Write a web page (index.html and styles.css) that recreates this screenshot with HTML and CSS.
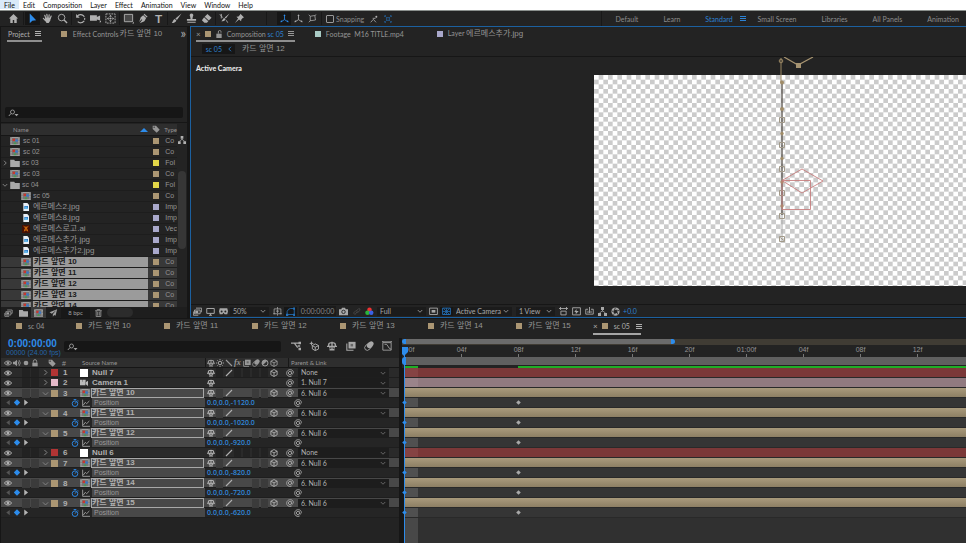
FILE: index.html
```html
<!DOCTYPE html>
<html lang="en">
<head>
<meta charset="utf-8">
<title>Composition editor</title>
<link rel="stylesheet" href="styles.css">
</head>
<body>
<svg class="sprite" aria-hidden="true">
  <symbol id="home" viewBox="0 0 12 12"><path fill="currentColor" d="M6 1 1 6h1.500v5h2.700V7.500h1.600V11h2.700V6H11z"/></symbol>
  <symbol id="arrow" viewBox="0 0 12 12"><path fill="currentColor" d="M3 .5v10.800l2.800-2.900 4.200-.4z"/></symbol>
  <symbol id="hand" viewBox="0 0 12 12"><path fill="none" stroke="currentColor" stroke-width="1.300" stroke-linecap="round" d="M4.300 6 3 2.500M5.800 5.500 5.300 1.500M7.400 5.500l.4-3.600M8.800 6.300l1.200-3M3.600 8 1.500 5.800"/><path fill="currentColor" d="M3.700 5.300h5.600L9 8.500 7.300 11H5L2.800 7.500z"/></symbol>
  <symbol id="zoomtool" viewBox="0 0 12 12"><circle cx="5" cy="5" r="3.600" fill="none" stroke="currentColor" stroke-width="1"/><path stroke="currentColor" stroke-width="1.500" d="m7.700 7.700 3.300 3.300"/></symbol>
  <symbol id="rotate" viewBox="0 0 12 12"><path fill="none" stroke="currentColor" stroke-width="1.200" d="M2.500 3.500A4.500 4.500 0 1 1 3 9.500" stroke-dasharray="9 1 2 1"/><path fill="currentColor" d="M1.200 1v4.200h4z"/></symbol>
  <symbol id="cam" viewBox="0 0 12 12"><path fill="currentColor" d="M0 2.500h7.500v1.800L11 2.800v5.400L7.500 7v1.500H0zM10 10l2-2v2z"/></symbol>
  <symbol id="pan" viewBox="0 0 12 12"><path fill="none" stroke="currentColor" stroke-dasharray="2 1" d="M1 1h10v10H1z"/><path fill="currentColor" d="m6 2 1.500 2h-3zM6 10 4.500 8h3zM2 6l2-1.500v3zM10 6 8 7.500v-3z"/><circle cx="6" cy="6" r="1.200" fill="currentColor"/></symbol>
  <symbol id="rect" viewBox="0 0 12 12"><path fill="#484848" stroke="currentColor" d="M1.500 1.500h9v8h-9z"/><path fill="currentColor" d="m12 9.500-2 2h2z"/></symbol>
  <symbol id="pen" viewBox="0 0 12 12"><path fill="currentColor" d="M7 .8 10.500 4l-1 1L6.200 1.800zM5.700 2.500l3.200 3L7 9l-5 2.300 2-3 .8-.8-.8-.8-2.700 3L3 4.500z"/></symbol>
  <symbol id="brush" viewBox="0 0 12 12"><path fill="currentColor" d="m11.500.5-5 7L4.800 6zM4.200 6.600l1.700 1.500C5 10.300 3 11 .8 11c1.200-1 1.200-3.500 3.400-4.400z"/></symbol>
  <symbol id="stamp" viewBox="0 0 12 12"><path fill="currentColor" d="M6 .5a2 2 0 0 1 1.500 3.300L7 6.500h4v2H1v-2h4l-.5-2.700A2 2 0 0 1 6 .5zM1.500 9.500h9v1h-9z"/></symbol>
  <symbol id="eraser" viewBox="0 0 12 12"><path fill="currentColor" d="m7 1 4.500 4.200L8.500 8.300 4 4z"/><path fill="currentColor" d="M3.400 4.700 8 9l-1.500 1.500H3.700L1 8z"/></symbol>
  <symbol id="roto" viewBox="0 0 12 12"><path fill="currentColor" d="m11.500.5-4 5.500-1.300-1.200zM5.900 5.400l1.300 1.300C6.500 8.500 4.500 9 2.500 9c1.500-1 1.600-3 3.400-3.600z"/><path fill="none" stroke="currentColor" d="M1 1.500 4 5M2.500 1v5M8 8l1.500 2.500"/></symbol>
  <symbol id="pin" viewBox="0 0 12 12"><path fill="currentColor" d="m7 .8 4 4-1.200.4L8 7l-.3 2L5.500 7 1 11l3.500-5L2.700 4l2.200-.3L6.600 2z"/></symbol>
  <symbol id="axis" viewBox="0 0 12 12"><path fill="none" stroke="currentColor" stroke-width="1.100" d="M6 7.500V2M6 7.500 2 10M6 7.500 10 10"/><path fill="currentColor" d="m6 .3 1.500 2.500h-3zM.5 11l1-3 1.700 2.500zM11.500 11l-1-3-1.700 2.500z"/></symbol>
  <symbol id="axisview" viewBox="0 0 12 12"><path fill="none" stroke="currentColor" d="M3 3 9 2l1 6-7 1zM1 11l2.500-2.500M1 1l2 2M11 1 9 2"/></symbol>
  <symbol id="snap" viewBox="0 0 12 12"><path fill="none" stroke="currentColor" stroke-width="1.200" d="m1 11 4-4.500 4 4.500M4 5h4l1-1"/><circle cx="9.500" cy="2.500" r="1.500" fill="currentColor"/></symbol>
  <symbol id="expand" viewBox="0 0 12 12"><path fill="none" stroke="currentColor" d="M1 3V1h2M9 1h2v2M11 9v2H9M3 11H1V9M2 2l2 2M10 2 8 4M2 10l2-2M10 10 8 8M4 4h4v4H4z"/></symbol>
  <symbol id="menu" viewBox="0 0 6 5"><path fill="currentColor" d="M0 0h6v1H0zM0 2h6v1H0zM0 4h6v1H0z"/></symbol>
  <symbol id="lock" viewBox="0 0 12 12"><path fill="currentColor" d="M2 5.500h8V11H2z"/><path fill="none" stroke="currentColor" stroke-width="1.400" d="M3.500 5.500V3.500a2.500 2.500 0 0 1 5 0v2"/></symbol>
  <symbol id="unlock" viewBox="0 0 12 12"><path fill="currentColor" d="M2 5.500h8V12H2z"/><path fill="none" stroke="currentColor" stroke-width="1.500" d="M5 5.500V3a2 2 0 0 1 4-.5V4"/></symbol>
  <symbol id="comp" viewBox="0 0 12 10"><path fill="#a9a9a9" d="M0 0h12v10H0z"/><path fill="#777" d="M2 1h8v8H2z"/><path stroke="#555" stroke-dasharray="1 1" d="M1 0v10M11 0v10"/><path fill="#c8372e" d="M3 2h3v3H3z"/><circle cx="8" cy="4.500" r="1.800" fill="#3e76c0"/><path fill="#479a56" d="M6 5.500 8 9H4z"/></symbol>
  <symbol id="folder" viewBox="0 0 12 10"><path fill="#a9a9a9" d="M0 1h5l1 1.500h6V10H0z"/></symbol>
  <symbol id="jpg" viewBox="0 0 12 12"><path fill="#e8eef5" d="M2 0h6l2.500 2.500V12H2z"/><path fill="#2b78c8" d="M3.500 4.500h5.500V9H3.500z"/><path fill="#62b7e9" d="M3.500 7 6 5l3 3v1H3.500z"/></symbol>
  <symbol id="ai" viewBox="0 0 12 12"><path fill="#431005" d="M0 0h12v12H0z"/><path fill="none" stroke="#e2730d" stroke-width="1.400" d="m3.500 9.500 2.500-7 2.500 7M4 7.500h4M2.500 2 5 4M9.500 2 7 4"/></symbol>
  <symbol id="search" viewBox="0 0 16 12"><circle cx="6.500" cy="4.500" r="3" fill="none" stroke="currentColor" stroke-width="1.300"/><path stroke="currentColor" stroke-width="1.400" d="M4.300 6.700 1 10.500"/><path fill="currentColor" d="M9.500 7.500h6l-3 3.500z"/></symbol>
  <symbol id="tag" viewBox="0 0 12 12"><path fill="currentColor" d="M1 1h5l5.500 6L7 11.500 1 6z"/><circle cx="3.200" cy="3.200" r="1" fill="#222"/></symbol>
  <symbol id="flow" viewBox="0 0 12 12"><path fill="currentColor" d="M4 0h4v4H4zM0 8h4v4H0zM8 8h4v4H8z"/><path fill="none" stroke="currentColor" d="M6 4v2M2 8l4-3 4 3"/></symbol>
  <symbol id="eye" viewBox="0 0 12 12"><path fill="none" stroke="currentColor" stroke-width="1.500" d="M.5 6C3.500 2 8.500 2 11.500 6 8.500 10 3.500 10 .5 6z"/><circle cx="6" cy="6" r="2.200" fill="currentColor"/></symbol>
  <symbol id="speaker" viewBox="0 0 12 12"><path fill="currentColor" d="M0 4h2.500L6 1v10L2.500 8H0z"/><path fill="none" stroke="currentColor" stroke-width="1.200" d="M7.500 3.500q2 2.500 0 5M9 1.500q4 4.500 0 9"/></symbol>
  <symbol id="dot" viewBox="0 0 12 12"><circle cx="6" cy="6" r="3.500" fill="currentColor"/></symbol>
  <symbol id="shy" viewBox="0 0 12 12"><path fill="none" stroke="currentColor" stroke-width="1.600" d="M2 6V4.500Q2 2 6 2t4 2.500V6M0 6.500h12M6 1v10M3 10.500h6M3.500 6.500v2.500M8.500 6.500v2.500"/></symbol>
  <symbol id="sun" viewBox="0 0 12 12"><circle cx="6" cy="6" r="2.500" fill="none" stroke="currentColor" stroke-width="1.500"/><path stroke="currentColor" stroke-width="1.500" d="M6 0v2M6 10v2M0 6h2M10 6h2M2 2l1.500 1.500M10 2 8.500 3.500M2 10l1.500-1.500M10 10 8.500 8.500"/></symbol>
  <symbol id="slash" viewBox="0 0 12 12"><path stroke="currentColor" stroke-width="1.700" d="m1.500 10.500 9-9"/></symbol>
  <symbol id="backslash" viewBox="0 0 12 12"><path stroke="currentColor" stroke-width="1.700" d="m1.500 1.500 9 9"/></symbol>
  <symbol id="blend" viewBox="0 0 12 12"><path fill="currentColor" d="M3 1h8.500v8H3z"/><path fill="none" stroke="currentColor" stroke-width="1.300" d="M1 3v8h8"/><path fill="#666" d="M5.500 3.500h3v3h-3z"/></symbol>
  <symbol id="blur" viewBox="0 0 12 12"><ellipse cx="7.500" cy="4.500" rx="4.500" ry="3.200" transform="rotate(-45 7.500 4.500)" fill="currentColor"/><ellipse cx="5" cy="7" rx="4.800" ry="3.300" transform="rotate(-45 5 7)" fill="none" stroke="currentColor"/></symbol>
  <symbol id="adjust" viewBox="0 0 12 12"><circle cx="6" cy="6" r="4.500" fill="none" stroke="currentColor" stroke-width="1.500"/><path fill="currentColor" d="M2.500 9.500l7-7a5 5 0 0 0-7 7z"/></symbol>
  <symbol id="cube" viewBox="0 0 12 12"><path fill="none" stroke="currentColor" stroke-width="1.300" d="m6 .8 4.700 2.500v5.400L6 11.200 1.300 8.700V3.300zM1.300 3.300 6 5.800l4.700-2.500M6 5.800v5.400"/></symbol>
  <symbol id="whip" viewBox="0 0 12 12"><path fill="none" stroke="currentColor" stroke-width="1.300" d="M8 4.500A2.500 2.500 0 1 0 8 7.500V3.500M8 7q1.500 1.500 2.700-.5C12 2 7.500 0 4 1.500S0 8 3 10.300q3 1.700 5.500.2"/></symbol>
  <symbol id="down" viewBox="0 0 12 12"><path fill="none" stroke="currentColor" stroke-width="1.600" d="m1.500 4 4.500 4.500L10.500 4"/></symbol>
  <symbol id="right" viewBox="0 0 12 12"><path fill="none" stroke="currentColor" stroke-width="1.700" d="m4 1.500 4.500 4.500L4 10.500"/></symbol>
  <symbol id="left" viewBox="0 0 12 12"><path fill="none" stroke="currentColor" stroke-width="1.700" d="M8 1.500 3.500 6 8 10.500"/></symbol>
  <symbol id="watch" viewBox="0 0 12 12"><circle cx="6" cy="7" r="4.200" fill="none" stroke="currentColor" stroke-width="1.400"/><path fill="none" stroke="currentColor" stroke-width="1.400" d="M4 .8h4M6 7l2-2.500M10 2l1.500 1.500"/></symbol>
  <symbol id="graph" viewBox="0 0 12 12"><path fill="none" stroke="currentColor" stroke-width="1.200" d="M1 1v10h11M2 9l3-4 2 2 4-4"/></symbol>
  <symbol id="graphbox" viewBox="0 0 12 12"><path fill="none" stroke="currentColor" d="M1 2v9h10V2zM0 1h12M3 4q3-1 4 2t4 4M1 1V0M11 1V0"/></symbol>
  <symbol id="prev" viewBox="0 0 12 12"><path fill="currentColor" d="M9 1.500v9L3 6z"/></symbol>
  <symbol id="next" viewBox="0 0 12 12"><path fill="currentColor" d="M3 1v10l6.500-5z"/></symbol>
  <symbol id="key" viewBox="0 0 12 12"><path fill="currentColor" d="m6 .5 5.500 5.500L6 11.500.5 6z"/></symbol>
  <symbol id="solid" viewBox="0 0 12 12"><path fill="#fff" d="M0 0h12v12H0z"/></symbol>
  <symbol id="film" viewBox="0 0 12 12"><path fill="#bbb" d="M0 1h4v3H0zM4.500 1h4v3h-4zM0 4h8v5.500H0zM8.500 5 12 2.500v8L8.500 8z"/></symbol>
  <symbol id="footage" viewBox="0 0 12 12"><path fill="none" stroke="currentColor" stroke-width="1.200" d="M4 1.500h7.500v5H10M2 4h7.500v5H2zM.5 6v5H7"/><path fill="currentColor" d="M3 5h4v3H3z"/></symbol>
  <symbol id="plane" viewBox="0 0 12 12"><path fill="currentColor" d="M11.500.5 0 5l3.500 2L10 2 5 8v3.500l2-2.500 2 1z"/></symbol>
  <symbol id="trash" viewBox="0 0 12 12"><path fill="none" stroke="currentColor" stroke-width="1.200" d="M1 2.500h10M4 2V.8h4V2M2.500 3v8.300h7V3M4.800 4v6M7.200 4v6"/></symbol>
  <symbol id="monitor" viewBox="0 0 12 12"><path fill="none" stroke="currentColor" stroke-width="1.300" d="M1 2h10v6.500H1zM4 11h4M6 8.500V11"/></symbol>
  <symbol id="goggles" viewBox="0 0 12 12"><path fill="currentColor" d="M1 1.500h10l1 4-1 4H7.500L6 7.500 4.500 9.500H1l-1-4z"/><circle cx="3.500" cy="6" r="1.300" fill="#222"/><circle cx="8.500" cy="6" r="1.300" fill="#222"/></symbol>
  <symbol id="guides" viewBox="0 0 12 12"><path fill="none" stroke="currentColor" d="M1.500 2.500h9v6.500h-9zM0 9h3M9 9h3M4 5.500h4M6 0v3.500M6 4v4M6 9v2.500"/></symbol>
  <symbol id="mask" viewBox="0 0 12 12"><path fill="none" stroke="currentColor" stroke-width="1.100" d="M1.500 10V6Q3 2 6 2h5v8z"/><path fill="currentColor" d="M0 9h3v3H0zM9.500.5h2.500v3H9.500zM9.500 9H12v3H9.500z"/></symbol>
  <symbol id="photo" viewBox="0 0 12 12"><path fill="currentColor" d="M0 3h3l1-2h4l1 2h3v8H0z"/><circle cx="6" cy="6.500" r="2.300" fill="none" stroke="#222" stroke-width="1.200"/></symbol>
  <symbol id="rgb" viewBox="0 0 12 12"><circle cx="6" cy="3.500" r="3" fill="#e33"/><circle cx="3.300" cy="7.500" r="3" fill="#2bb53a"/><circle cx="8.300" cy="7.500" r="3" fill="#3a62e8"/></symbol>
  <symbol id="roi" viewBox="0 0 12 12"><path fill="none" stroke="currentColor" stroke-width="1.200" d="M.8 1.500h10.400v8.500H.8z"/><path fill="currentColor" d="M3.500 4h5v3.500h-5z"/></symbol>
  <symbol id="grid" viewBox="0 0 12 12"><path fill="none" stroke="currentColor" stroke-width="1.200" d="M.8 1.500h10.400v8.500H.8z"/><path stroke="currentColor" d="m2 2 8 8M10 2 2 10M6 1.500v8.500M1 6h10"/></symbol>
  <symbol id="aspect" viewBox="0 0 12 12"><path fill="none" stroke="currentColor" stroke-width="1.200" d="M0 2h12M2 0v4M10 0v4M2.500 5.500h7v5h-7z"/></symbol>
  <symbol id="fast" viewBox="0 0 12 12"><path fill="none" stroke="currentColor" stroke-width="1.200" d="M.8 1h10.400v9.500H.8z"/><path fill="currentColor" d="M6 2.500v2.700h3L5 9.500V6.500H3z"/></symbol>
  <symbol id="tlbtn" viewBox="0 0 12 12"><path fill="none" stroke="currentColor" stroke-width="1.200" d="M1 3v6.500h10V3H8M1 3h3M4 5v3M8 5v3M6 0v8"/></symbol>
  <symbol id="shutter" viewBox="0 0 12 12"><circle cx="6" cy="6" r="4" fill="none" stroke="currentColor" stroke-width="3"/><path stroke="#222" d="m6 1-2 4M11 5 7 4M9 10 8 6M3 10l3-2M1 5l3 2"/></symbol>
  <symbol id="link" viewBox="0 0 12 12"><path fill="none" stroke="currentColor" stroke-width="1.300" d="m2 8 3-3q2-1 2 1L4 10zM6 5l3-3q3 0 1 3L7 8"/></symbol>
  <symbol id="mini" viewBox="0 0 12 12"><path fill="none" stroke="currentColor" stroke-width="1.500" d="M0 2.500h4L8 8M4 2.500h7"/><path fill="currentColor" d="M9 1h3v3H9zM8 5h3v2H8zM9 8h3v3H9z"/></symbol>
  <symbol id="draft" viewBox="0 0 12 12"><path fill="none" stroke="currentColor" stroke-width="1.200" d="m7.500 3.500 4 2v4l-4 2-3.500-2v-4zM4 5.500l3.500 2 4-2M7.500 7.500v4"/><path fill="currentColor" d="m3 0 .8 2 2 .8-2 .8L3 6l-.8-2.300-2-.9 2-.8z"/></symbol>
</svg>

<div class="app">
  <nav class="menubar">
    <button class="on">File</button><button>Edit</button><button>Composition</button><button>Layer</button><button>Effect</button><button>Animation</button><button>View</button><button>Window</button><button>Help</button>
  </nav>

  <header class="toolbar">
    <div class="tools home"><button aria-label="Home"><svg><use href="#home"/></svg></button></div>
    <div class="tools"><button class="on" aria-label="Selection"><svg><use href="#arrow"/></svg></button><button aria-label="Hand"><svg><use href="#hand"/></svg></button><button aria-label="Zoom"><svg><use href="#zoomtool"/></svg></button></div>
    <div class="tools"><button aria-label="Rotate"><svg><use href="#rotate"/></svg></button><button aria-label="Camera"><svg><use href="#cam"/></svg></button><button aria-label="Pan behind"><svg><use href="#pan"/></svg></button></div>
    <div class="tools"><button aria-label="Rectangle"><svg><use href="#rect"/></svg></button><button aria-label="Pen"><svg><use href="#pen"/></svg></button><button class="type">T</button></div>
    <div class="tools"><button aria-label="Brush"><svg><use href="#brush"/></svg></button><button aria-label="Clone stamp"><svg><use href="#stamp"/></svg></button><button aria-label="Eraser"><svg><use href="#eraser"/></svg></button></div>
    <div class="tools wide"><button aria-label="Roto brush"><svg><use href="#roto"/></svg></button><button aria-label="Puppet pin"><svg><use href="#pin"/></svg></button></div>
    <div class="tools axes"><button class="on" aria-label="Local axis"><svg><use href="#axis"/></svg></button><button aria-label="World axis"><svg><use href="#axis"/></svg></button><button aria-label="View axis"><svg><use href="#axisview"/></svg></button></div>
    <label class="snapping"><input type="checkbox">Snapping</label>
    <button class="snapbtn" aria-label="Snap edges"><svg><use href="#snap"/></svg></button>
    <button class="snapbtn blue" aria-label="Snap bounds"><svg><use href="#expand"/></svg></button>
    <nav class="workspaces">
      <button>Default</button><button>Learn</button><button class="current">Standard<svg class="burger"><use href="#menu"/></svg></button><button>Small Screen</button><button>Libraries</button><button>All Panels</button><button>Animation</button>
    </nav>
  </header>

  <main class="upper">
    <section class="project">
      <div class="tabs">
        <button class="tab active">Project<svg class="burger"><use href="#menu"/></svg></button>
        <button class="tab effects"><i class="sw sand"></i>Effect Controls <span class="ko">카드 앞면 10</span></button>
        <button class="more">»</button>
      </div>
      <div class="preview"></div>
      <label class="search"><svg><use href="#search"/></svg><input type="text" aria-label="Search project"></label>
      <div class="list">
        <table>
          <colgroup><col><col class="c-label"><col class="c-type"></colgroup>
          <thead><tr><th>Name<svg class="sort" viewBox="0 0 8 5"><path d="M4 0 8 4H0z"/></svg></th><th><svg><use href="#tag"/></svg></th><th>Type</th></tr></thead>
          <tbody>
            <tr><td><div class="n"><svg><use href="#comp"/></svg>sc 01</div></td><td><i class="sw sand"></i></td><td>Co</td></tr>
            <tr><td><div class="n"><svg><use href="#comp"/></svg>sc 02</div></td><td><i class="sw sand"></i></td><td>Co</td></tr>
            <tr><td><div class="n f"><svg class="tw"><use href="#right"/></svg><svg><use href="#folder"/></svg>sc 03</div></td><td><i class="sw yellow"></i></td><td>Fol</td></tr>
            <tr><td><div class="n"><svg><use href="#comp"/></svg>sc 03</div></td><td><i class="sw sand"></i></td><td>Co</td></tr>
            <tr><td><div class="n f"><svg class="tw"><use href="#down"/></svg><svg><use href="#folder"/></svg>sc 04</div></td><td><i class="sw yellow"></i></td><td>Fol</td></tr>
            <tr><td><div class="n in"><svg><use href="#comp"/></svg>sc 05</div></td><td><i class="sw sand"></i></td><td>Co</td></tr>
            <tr><td><div class="n in ko"><svg><use href="#jpg"/></svg>에르메스2.jpg</div></td><td><i class="sw lilac"></i></td><td>Imp</td></tr>
            <tr><td><div class="n in ko"><svg><use href="#jpg"/></svg>에르메스8.jpg</div></td><td><i class="sw lilac"></i></td><td>Imp</td></tr>
            <tr><td><div class="n in ko"><svg><use href="#ai"/></svg>에르메스로고.ai</div></td><td><i class="sw lilac"></i></td><td>Vec</td></tr>
            <tr><td><div class="n in ko"><svg><use href="#jpg"/></svg>에르메스추가.jpg</div></td><td><i class="sw lilac"></i></td><td>Imp</td></tr>
            <tr><td><div class="n in ko"><svg><use href="#jpg"/></svg>에르메스추가2.jpg</div></td><td><i class="sw lilac"></i></td><td>Imp</td></tr>
            <tr class="sel"><td><div class="n in ko"><svg><use href="#comp"/></svg><b>카드 앞면 10</b></div></td><td><i class="sw sand"></i></td><td>Co</td></tr>
            <tr class="sel"><td><div class="n in ko"><svg><use href="#comp"/></svg><b>카드 앞면 11</b></div></td><td><i class="sw sand"></i></td><td>Co</td></tr>
            <tr class="sel"><td><div class="n in ko"><svg><use href="#comp"/></svg><b>카드 앞면 12</b></div></td><td><i class="sw sand"></i></td><td>Co</td></tr>
            <tr class="sel"><td><div class="n in ko"><svg><use href="#comp"/></svg><b>카드 앞면 13</b></div></td><td><i class="sw sand"></i></td><td>Co</td></tr>
            <tr class="sel"><td><div class="n in ko"><svg><use href="#comp"/></svg><b>카드 앞면 14</b></div></td><td><i class="sw sand"></i></td><td>Co</td></tr>
          </tbody>
        </table>
        <div class="scroll"><svg><use href="#flow"/></svg><i></i></div>
      </div>
      <footer class="pfoot">
        <button aria-label="Interpret footage"><svg><use href="#footage"/></svg></button><button aria-label="New folder"><svg><use href="#folder"/></svg></button><button class="on" aria-label="New composition"><svg><use href="#comp"/></svg></button><button aria-label="Project settings"><svg><use href="#plane"/></svg></button><button class="bpc">8 bpc</button><button aria-label="Delete"><svg><use href="#trash"/></svg></button><i class="hthumb"></i>
      </footer>
    </section>

    <section class="viewer">
      <div class="tabs">
        <button class="tab active"><span class="x">×</span><i class="sw sand"></i><svg class="lk"><use href="#unlock"/></svg><span>Composition <em>sc 05</em></span><svg class="burger"><use href="#menu"/></svg></button>
        <button class="tab"><i class="sw mint"></i><span>Footage&nbsp; M16 TITLE.mp4</span></button>
        <button class="tab layer"><i class="sw lilac"></i><span>Layer <span class="ko">에르메스추가.jpg</span></span></button>
      </div>
      <div class="crumbs"><button class="on">sc 05<svg><use href="#left"/></svg></button><button class="ko">카드 앞면 12</button></div>
      <div class="stage">
        <span class="camname">Active Camera</span>
        <svg class="canvas">
          <defs><pattern id="check" width="28" height="28" patternUnits="userSpaceOnUse" patternTransform="scale(.33333)"><path fill="#fff" d="M0 0h28v28H0z"/><path fill="#cbcbcb" d="M14 0h14v14H14zM0 14h14v14H0z"/></pattern></defs>
          <rect width="100%" height="100%" fill="url(#check)"/>
          <path d="M188 8v132" stroke="#55504a" stroke-width="1.300"/><path d="M188 140v24" stroke="#aaa"/>
          <path d="M187 -17V8" stroke="#9a8763"/><circle cx="187" cy="-14" r="1.800" fill="none" stroke="#9a8763"/>
          <path d="m190-18 14 8 15-8" fill="none" stroke="#a79471" stroke-width="1.200"/><path fill="#a79471" d="M202-12h5v5h-5z"/>
          <g fill="#a08c68"><circle cx="188" cy="7.500" r="2"/><circle cx="188" cy="34" r="2"/><circle cx="188" cy="58.500" r="1.700"/><circle cx="188" cy="83.500" r="1.700"/><circle cx="188" cy="107" r="1.700"/><circle cx="188" cy="131" r="1.700"/></g>
          <path fill="none" stroke="#a29a8a" d="M185.500 42.500h5v5h-5zM185.500 67.500h5v5h-5zM185.500 91.500h5v5h-5zM185.500 115.500h5v5h-5zM185.500 138.500h5v5h-5zM185.500 161.500h5v5h-5zM186.500 162.500l3 3"/>
          <path fill="none" stroke="#c77a7a" d="m188 105.500 20-11.500 21 12-21 12zM188 105.500h28.500v29H188z" opacity=".85"/>
        </svg>
      </div>
      <footer class="vfoot">
        <button aria-label="Always preview"><svg><use href="#footage"/></svg></button><button aria-label="Primary viewer"><svg><use href="#monitor"/></svg></button><button aria-label="VR"><svg><use href="#goggles"/></svg></button>
        <span class="pick w-zoom"><select aria-label="Magnification"><option>50%</option></select><svg><use href="#down"/></svg></span>
        <button aria-label="Guides"><svg><use href="#guides"/></svg></button><button class="on" aria-label="Mask visibility"><svg><use href="#mask"/></svg></button>
        <button class="time">0:00:00:00</button>
        <button aria-label="Snapshot"><svg><use href="#photo"/></svg></button><button class="dim" aria-label="Show snapshot"><svg><use href="#link"/></svg></button><button aria-label="Channels"><svg><use href="#rgb"/></svg></button>
        <span class="pick w-res"><select aria-label="Resolution"><option>Full</option></select><svg><use href="#down"/></svg></span>
        <button aria-label="Region of interest"><svg><use href="#roi"/></svg></button><button class="on" aria-label="Transparency grid"><svg><use href="#grid"/></svg></button>
        <span class="pick w-cam"><select aria-label="3D view"><option>Active Camera</option></select><svg><use href="#down"/></svg></span>
        <span class="pick w-view"><select aria-label="View layout"><option>1 View</option></select><svg><use href="#down"/></svg></span>
        <button aria-label="Pixel aspect"><svg><use href="#aspect"/></svg></button><button aria-label="Fast previews"><svg><use href="#fast"/></svg></button><button aria-label="Timeline"><svg><use href="#tlbtn"/></svg></button><button aria-label="Flowchart"><svg><use href="#flow"/></svg></button><button class="exp" aria-label="Reset exposure"><svg><use href="#shutter"/></svg></button><button class="val">+0.0</button>
      </footer>
    </section>
  </main>

  <section class="timeline">
    <div class="ttabs">
      <button class="first"><i class="sw sand"></i>sc 04</button><button><i class="sw sand"></i><span class="ko">카드 앞면 10</span></button><button><i class="sw sand"></i><span class="ko">카드 앞면 11</span></button><button><i class="sw sand"></i><span class="ko">카드 앞면 12</span></button><button><i class="sw sand"></i><span class="ko">카드 앞면 13</span></button><button><i class="sw sand"></i><span class="ko">카드 앞면 14</span></button><button class="last"><i class="sw sand"></i><span class="ko">카드 앞면 15</span></button><button class="active"><span class="x">×</span><i class="sw sand"></i>sc 05<svg class="burger"><use href="#menu"/></svg></button>
    </div>
    <div class="split">
      <div class="layers">
        <div class="controls">
          <div class="clock"><strong>0:00:00:00</strong><small>00000 (24.00 fps)</small></div>
          <label class="search"><svg><use href="#search"/></svg><input type="text" aria-label="Search layers"></label>
          <div class="switchbar"><button aria-label="Mini flowchart"><svg><use href="#mini"/></svg></button><button aria-label="Draft 3D"><svg><use href="#draft"/></svg></button><button aria-label="Hide shy"><svg><use href="#shy"/></svg></button><button aria-label="Frame blending"><svg><use href="#blend"/></svg></button><button aria-label="Motion blur"><svg><use href="#blur"/></svg></button><button aria-label="Graph editor"><svg><use href="#graphbox"/></svg></button></div>
        </div>
        <div class="row head">
          <div class="av"><svg><use href="#eye"/></svg><svg><use href="#speaker"/></svg><svg><use href="#dot"/></svg><svg><use href="#lock"/></svg></div>
          <span></span><svg><use href="#tag"/></svg><span class="num">#</span><span class="src">Source Name</span>
          <div class="sws"><svg><use href="#shy"/></svg><svg><use href="#sun"/></svg><svg><use href="#backslash"/></svg><i>fx</i><svg><use href="#blend"/></svg><svg><use href="#blur"/></svg><svg><use href="#adjust"/></svg><svg><use href="#cube"/></svg></div>
          <span class="plink">Parent &amp; Link</span>
        </div>

        <div class="row"><div class="av"><svg><use href="#eye"/></svg><b></b><b></b><b></b></div><svg class="tw"><use href="#right"/></svg><i class="sw red"></i><span class="num">1</span><svg class="ic"><use href="#solid"/></svg><span class="name">Null 7</span><div class="sws"><svg><use href="#shy"/></svg><b></b><svg><use href="#slash"/></svg><b></b><b></b><b></b><b></b><svg><use href="#cube"/></svg></div><svg class="wh"><use href="#whip"/></svg><span class="pick"><select aria-label="Parent of layer 1"><option>None</option></select><svg><use href="#down"/></svg></span></div>
        <div class="row"><div class="av"><svg><use href="#eye"/></svg><b></b><b></b><b></b></div><svg class="tw"><use href="#right"/></svg><i class="sw pink"></i><span class="num">2</span><svg class="ic"><use href="#film"/></svg><span class="name">Camera 1</span><div class="sws"><svg><use href="#shy"/></svg></div><svg class="wh"><use href="#whip"/></svg><span class="pick"><select aria-label="Parent of layer 2"><option>1. Null 7</option></select><svg><use href="#down"/></svg></span></div>
        <div class="row sel"><div class="av"><svg><use href="#eye"/></svg><b></b><b></b><b></b></div><svg class="tw"><use href="#down"/></svg><i class="sw sand"></i><span class="num">3</span><svg class="ic"><use href="#comp"/></svg><span class="name ko">카드 앞면 10</span><div class="sws"><svg><use href="#shy"/></svg><b></b><svg><use href="#slash"/></svg><span></span><span></span><b></b><b></b><svg><use href="#cube"/></svg></div><svg class="wh"><use href="#whip"/></svg><span class="pick"><select aria-label="Parent of layer 3"><option>6. Null 6</option></select><svg><use href="#down"/></svg></span></div>
        <div class="row prop"><div class="nav"><svg><use href="#prev"/></svg><svg class="k"><use href="#key"/></svg><svg class="p"><use href="#next"/></svg></div><svg class="st"><use href="#watch"/></svg><svg><use href="#graph"/></svg><span class="pname">Position</span><button class="value">0.0,0.0,-1120.0</button><svg class="wh"><use href="#whip"/></svg></div>
        <div class="row sel"><div class="av"><svg><use href="#eye"/></svg><b></b><b></b><b></b></div><svg class="tw"><use href="#down"/></svg><i class="sw sand"></i><span class="num">4</span><svg class="ic"><use href="#comp"/></svg><span class="name ko">카드 앞면 11</span><div class="sws"><svg><use href="#shy"/></svg><b></b><svg><use href="#slash"/></svg><span></span><span></span><b></b><b></b><svg><use href="#cube"/></svg></div><svg class="wh"><use href="#whip"/></svg><span class="pick"><select aria-label="Parent of layer 4"><option>6. Null 6</option></select><svg><use href="#down"/></svg></span></div>
        <div class="row prop"><div class="nav"><svg><use href="#prev"/></svg><svg class="k"><use href="#key"/></svg><svg class="p"><use href="#next"/></svg></div><svg class="st"><use href="#watch"/></svg><svg><use href="#graph"/></svg><span class="pname">Position</span><button class="value">0.0,0.0,-1020.0</button><svg class="wh"><use href="#whip"/></svg></div>
        <div class="row sel"><div class="av"><svg><use href="#eye"/></svg><b></b><b></b><b></b></div><svg class="tw"><use href="#down"/></svg><i class="sw sand"></i><span class="num">5</span><svg class="ic"><use href="#comp"/></svg><span class="name ko">카드 앞면 12</span><div class="sws"><svg><use href="#shy"/></svg><b></b><svg><use href="#slash"/></svg><span></span><span></span><b></b><b></b><svg><use href="#cube"/></svg></div><svg class="wh"><use href="#whip"/></svg><span class="pick"><select aria-label="Parent of layer 5"><option>6. Null 6</option></select><svg><use href="#down"/></svg></span></div>
        <div class="row prop"><div class="nav"><svg><use href="#prev"/></svg><svg class="k"><use href="#key"/></svg><svg class="p"><use href="#next"/></svg></div><svg class="st"><use href="#watch"/></svg><svg><use href="#graph"/></svg><span class="pname">Position</span><button class="value">0.0,0.0,-920.0</button><svg class="wh"><use href="#whip"/></svg></div>
        <div class="row"><div class="av"><svg><use href="#eye"/></svg><b></b><b></b><b></b></div><svg class="tw"><use href="#right"/></svg><i class="sw red"></i><span class="num">6</span><svg class="ic"><use href="#solid"/></svg><span class="name">Null 6</span><div class="sws"><svg><use href="#shy"/></svg><b></b><svg><use href="#slash"/></svg><b></b><b></b><b></b><b></b><svg><use href="#cube"/></svg></div><svg class="wh"><use href="#whip"/></svg><span class="pick"><select aria-label="Parent of layer 6"><option>None</option></select><svg><use href="#down"/></svg></span></div>
        <div class="row sel"><div class="av"><svg><use href="#eye"/></svg><b></b><b></b><b></b></div><svg class="tw"><use href="#down"/></svg><i class="sw sand"></i><span class="num">7</span><svg class="ic"><use href="#comp"/></svg><span class="name ko">카드 앞면 13</span><div class="sws"><svg><use href="#shy"/></svg><b></b><svg><use href="#slash"/></svg><span></span><span></span><b></b><b></b><svg><use href="#cube"/></svg></div><svg class="wh"><use href="#whip"/></svg><span class="pick"><select aria-label="Parent of layer 7"><option>6. Null 6</option></select><svg><use href="#down"/></svg></span></div>
        <div class="row prop"><div class="nav"><svg><use href="#prev"/></svg><svg class="k"><use href="#key"/></svg><svg class="p"><use href="#next"/></svg></div><svg class="st"><use href="#watch"/></svg><svg><use href="#graph"/></svg><span class="pname">Position</span><button class="value">0.0,0.0,-820.0</button><svg class="wh"><use href="#whip"/></svg></div>
        <div class="row sel"><div class="av"><svg><use href="#eye"/></svg><b></b><b></b><b></b></div><svg class="tw"><use href="#down"/></svg><i class="sw sand"></i><span class="num">8</span><svg class="ic"><use href="#comp"/></svg><span class="name ko">카드 앞면 14</span><div class="sws"><svg><use href="#shy"/></svg><b></b><svg><use href="#slash"/></svg><span></span><span></span><b></b><b></b><svg><use href="#cube"/></svg></div><svg class="wh"><use href="#whip"/></svg><span class="pick"><select aria-label="Parent of layer 8"><option>6. Null 6</option></select><svg><use href="#down"/></svg></span></div>
        <div class="row prop"><div class="nav"><svg><use href="#prev"/></svg><svg class="k"><use href="#key"/></svg><svg class="p"><use href="#next"/></svg></div><svg class="st"><use href="#watch"/></svg><svg><use href="#graph"/></svg><span class="pname">Position</span><button class="value">0.0,0.0,-720.0</button><svg class="wh"><use href="#whip"/></svg></div>
        <div class="row sel"><div class="av"><svg><use href="#eye"/></svg><b></b><b></b><b></b></div><svg class="tw"><use href="#down"/></svg><i class="sw sand"></i><span class="num">9</span><svg class="ic"><use href="#comp"/></svg><span class="name ko">카드 앞면 15</span><div class="sws"><svg><use href="#shy"/></svg><b></b><svg><use href="#slash"/></svg><span></span><span></span><b></b><b></b><svg><use href="#cube"/></svg></div><svg class="wh"><use href="#whip"/></svg><span class="pick"><select aria-label="Parent of layer 9"><option>6. Null 6</option></select><svg><use href="#down"/></svg></span></div>
        <div class="row prop"><div class="nav"><svg><use href="#prev"/></svg><svg class="k"><use href="#key"/></svg><svg class="p"><use href="#next"/></svg></div><svg class="st"><use href="#watch"/></svg><svg><use href="#graph"/></svg><span class="pname">Position</span><button class="value">0.0,0.0,-620.0</button><svg class="wh"><use href="#whip"/></svg></div>
      </div>

      <div class="time-area">
        <div class="navigator"><i></i></div>
        <div class="ruler"><span class="zero">:00f</span><span>04f</span><span>08f</span><span>12f</span><span>16f</span><span>20f</span><span>01:00f</span><span>04f</span><span>08f</span><span>12f</span></div>
        <div class="workarea"></div>
        <div class="cache"><i class="a"></i><i class="b"></i></div>
        <div class="tracks">
          <div class="t null"></div><div class="t camera"></div>
          <div class="t comp"></div><div class="t keys"><svg><use href="#key"/></svg><svg><use href="#key"/></svg></div>
          <div class="t comp"></div><div class="t keys"><svg><use href="#key"/></svg><svg><use href="#key"/></svg></div>
          <div class="t comp"></div><div class="t keys"><svg><use href="#key"/></svg><svg><use href="#key"/></svg></div>
          <div class="t null"></div>
          <div class="t comp"></div><div class="t keys"><svg><use href="#key"/></svg><svg><use href="#key"/></svg></div>
          <div class="t comp"></div><div class="t keys"><svg><use href="#key"/></svg><svg><use href="#key"/></svg></div>
          <div class="t comp"></div><div class="t keys"><svg><use href="#key"/></svg><svg><use href="#key"/></svg></div>
        </div>
        <div class="playhead"><svg viewBox="0 0 8 9"><path d="M0 0h8v5L4 9 0 5z"/></svg></div>
      </div>
    </div>
  </section>
</div>
</body>
</html>
```
FILE: styles.css
```css
* { box-sizing: border-box; }
body {
  margin: 0;
  background: #161616;
  color: #959595;
  font: 7px/10px Lato, "Noto Sans CJK KR", sans-serif;
}
button, select, input { font: inherit; color: inherit; background: none; border: 0; padding: 0; margin: 0; }
button { display: inline-flex; align-items: center; justify-content: center; white-space: nowrap; }
svg { display: block; width: 8px; height: 8px; flex: none; }
em { font-style: normal; color: #2d82d2; }
.sprite { position: absolute; width: 0; height: 0; }
.ko { font-family: "Liberation Sans", "Noto Sans CJK KR", sans-serif; font-size: 8px; }
.x { font-size: 8px; }

.app { display: flex; flex-direction: column; height: 100vh; overflow: hidden; }

.sw { display: block; width: 6px; height: 6px; flex: none; }
.sand { background: #ab9673; }
.yellow { background: #e2d648; }
.lilac { background: #a9a8cb; }
.mint { background: #a9cbc5; }
.red { background: #b13434; }
.pink { background: #e5b9c9; }

/* menu bar */
.menubar { display: flex; height: 11px; background: #fff; color: #111; border-bottom: 1px solid #8b908d; }
.menubar button { height: 9px; padding: 0 4px; }
.menubar .on { background: #d9eaf9; }

/* toolbar */
.toolbar { display: flex; align-items: center; height: 15px; background: #232323; color: #b0b0b0; }
.tools { display: flex; padding: 0 1px; height: 13px; border-right: 1px solid #181818; }
.tools button { width: 15px; height: 13px; }
.tools svg { width: 11px; height: 11px; }
.tools .on { color: #2d8ceb; background: #161616; }
.tools .type { font-size: 12px; font-weight: 700; }
.tools.home { padding: 0 2px 0 6px; }
.tools.wide { padding-right: 19px; }
.tools.axes { padding: 0 2px 0 10px; }
.tools.axes button { width: 14px; }
.tools.axes svg { width: 9px; height: 9px; }
.snapping { display: flex; align-items: center; gap: 2px; padding-left: 4px; margin-right: 3px; color: #8c8c8c; }
.snapping input { appearance: none; width: 8px; height: 8px; border: 1px solid #999; border-radius: 1px; }
.snapbtn { width: 14px; }
.blue { color: #2470b8; }
.workspaces { display: flex; align-items: center; gap: 25px; height: 15px; margin-left: auto; padding: 0 7px 0 13px; border-left: 1px solid #181818; color: #8c8c8c; }
.workspaces .current { color: #2d82d2; gap: 7px; margin-right: -13px; }

/* upper panels */
.upper { display: grid; grid-template-columns: 190px minmax(0, 1fr); flex: 292 1 0; min-height: 0; }
.tabs { display: flex; align-items: center; height: 16px; }
.tab { height: 16px; gap: 5px; border-bottom: 2px solid transparent; }
.tab.active { border-color: #8f8f8f; }
.burger { width: 6px; height: 5px; }

.project { display: flex; flex-direction: column; min-height: 0; margin: 1px 3px 0 1px; background: #232323; }
.project .tabs { padding-left: 6px; height: 15px; }
.project .tab { height: 15px; }
.project .tab.active { color: #b0b0b0; padding: 0 1px; }
.project .effects { margin-left: 19px; gap: 6px; }
.project .effects .ko { margin-left: -5px; }
.more { height: 12px; margin-left: auto; padding-right: 1px; font-size: 13px; line-height: 8px; align-items: flex-start; color: #aaa; }
.preview { flex: 1; min-height: 0; }
.search { display: flex; align-items: center; gap: 4px; height: 11px; padding-left: 3px; border-radius: 2px; background: #161616; color: #a0a0a0; }
.search svg { width: 11px; height: 8px; }
.search input { flex: 1; min-width: 0; height: 9px; outline: 0; }
.project .search { margin: 0 4px 4px; }
.list { display: flex; height: 185px; border-top: 1px solid #161616; overflow: hidden; }
.list table { flex: 1; min-width: 0; table-layout: fixed; border-collapse: collapse; margin-top: 1px; font-family: "Liberation Sans", "Noto Sans CJK KR", sans-serif; }
.c-label { width: 12px; }
.c-type { width: 16px; }
.list th, .list td { height: 11px; padding: 0; text-align: left; line-height: 9px; overflow: hidden; white-space: nowrap; vertical-align: middle; }
.list th { background: #2e2e2e; font-weight: 400; font-family: Lato, sans-serif; font-size: 6px; border-bottom: 1px solid #161616; }
.list th:first-child { padding-left: 12px; }
.list th:last-child { overflow: visible; }
.sort { float: right; width: 8px; height: 5px; margin-top: 3px; fill: #2d8ceb; }
.list td { border-bottom: 1px solid #1d1d1d; }
.list td + td { padding-left: 5px; }
.list th + th { padding-left: 4px; }
.n { display: flex; align-items: center; gap: 3px; height: 10px; padding-left: 9px; }
.n svg { width: 10px; height: 8px; }
.n.f { padding-left: 1px; gap: 2px; }
.n .tw { width: 6px; height: 6px; }
.n.in { padding-left: 20px; gap: 2px; }
.sel .n b { flex: 1; align-self: stretch; background: #9b9b9b; color: #1b1b1b; line-height: 10px; padding-left: 1px; }
.list .sel td { background: #383838; }
.scroll { width: 10px; padding: 13px 1px 0; color: #b0b0b0; }
.scroll i { display: block; height: 78px; margin-top: 27px; border-radius: 4px; background: #363636; }
.pfoot { display: flex; align-items: center; height: 11px; background: #1e1e1e; color: #a0a0a0; }
.pfoot button { width: 15px; height: 11px; }
.pfoot svg { width: 9px; height: 8px; }
.pfoot .on { background: #3a3a3a; }
.pfoot .bpc { width: 29px; font-size: 6px; background: #181818; margin: 0 1px 0 0; }
.hthumb { width: 26px; height: 9px; margin-left: 1px; border-radius: 5px; background: #2c2c2c; }

.viewer { display: flex; flex-direction: column; min-width: 0; min-height: 0; background: #232323; border: 1px solid #1c609f; border-width: 1px 0 1px 1px; }
.viewer .tabs { height: 15px; padding-left: 5px; }
.viewer .tab { height: 15px; margin-right: 20px; }
.viewer .tab.active { gap: 4px; padding-right: 1px; }
.viewer .layer { margin-left: 13px; }
.crumbs { display: flex; align-items: flex-end; gap: 7px; height: 15px; padding: 0 0 2px 11px; border-bottom: 1px solid #161616; }
.crumbs .on { width: 33px; height: 10px; gap: 5px; justify-content: flex-end; padding-right: 2px; color: #2d82d2; background: #161616; }
.crumbs svg { width: 6px; height: 6px; }
.stage { position: relative; flex: 1; min-height: 0; display: flex; padding: 18px 0; overflow: hidden; }
.camname { position: absolute; left: 5px; top: 6px; color: #e8e8e8; font-weight: 900; }
.canvas { width: 48%; height: 100%; margin-left: auto; overflow: visible; }
.vfoot { display: flex; align-items: center; height: 13px; border-top: 1px solid #161616; color: #a8a8a8; }
.vfoot button { width: 13px; }
.vfoot svg { width: 9px; height: 9px; }
.vfoot .on { color: #2470b8; background: #161616; }
.vfoot .time { width: 37px; margin: 0 1px 0 2px; background: #1b1b1b; color: #888; }
.vfoot .dim { color: #444; }
.vfoot .val { color: #2d82d2; width: 16px; }
.pick { display: flex; align-items: center; height: 9px; padding: 0 3px; background: #1b1b1b; }
.pick select { flex: 1; min-width: 0; height: 9px; appearance: none; outline: 0; line-height: 9px; }
.pick svg, .vfoot .pick svg { width: 6px; height: 6px; }
.w-zoom { width: 39px; margin-right: 2px; }
.w-res { width: 49px; margin: 0 1px; }
.w-cam { width: 59px; }
.w-view { width: 39px; margin: 0 2px 0 4px; }

/* timeline */
.timeline { display: flex; flex-direction: column; flex: 224 1 0; min-height: 0; margin: 1px 0 0 1px; background: #232323; }
.ttabs { display: flex; height: 16px; padding-left: 15px; }
.ttabs button { width: 88px; height: 16px; gap: 6px; justify-content: flex-start; border-bottom: 2px solid transparent; }
.ttabs .first { width: 60px; }
.ttabs .last { width: 77px; }
.ttabs .active { width: 48px; gap: 6px; border-color: #a5a5a5; color: #b0b0b0; }
.ttabs .x { margin-right: -2px; }
.split { display: grid; grid-template-columns: 398px minmax(0, 1fr); column-gap: 3px; flex: 1; min-height: 0; margin-top: 3px; background: linear-gradient(90deg, #232323 398px, #161616 398px); }
.layers { min-width: 0; }
.controls { display: flex; align-items: flex-start; height: 20px; padding-top: 1px; }
.clock { width: 63px; padding-left: 5px; color: #2d8ceb; }
.clock strong { display: block; padding-left: 2px; font: 700 10px/9px "Liberation Sans", sans-serif; }
.clock small { display: block; font: 7px/9px "Liberation Sans", sans-serif; color: #2366a8; white-space: nowrap; }
.controls .search { width: 217px; margin-top: 2px; }
.switchbar { display: flex; flex: 1; justify-content: space-between; padding: 2px 7px 0 10px; color: #a8a8a8; }
.switchbar svg { width: 10px; height: 10px; }

.row {
  display: grid;
  grid-template-columns: 39px 11px 10px 19px 11px 115px 80px 12px minmax(0, 1fr);
  align-items: center;
  height: 10px;
  padding-right: 10px;
  background: #2a2a2a;
  border-bottom: 1px solid #1e1e1e;
  color: #b0b0b0;
}
.row svg { width: 8px; height: 8px; }
.row .sw { width: 7px; height: 7px; }
.row .tw { width: 7px; height: 7px; margin-left: 2px; color: #888; }
.av { display: grid; grid-template-columns: repeat(4, 8px); column-gap: 1px; padding-left: 3px; align-items: center; }
.av b, .sws b { height: 9px; background: #222; }
.av b:nth-child(2) { background: none; }
.num { font: 700 8px/9px "Liberation Sans", sans-serif; padding-left: 2px; }
.name { height: 9px; padding-left: 1px; font: 700 8px/10px "Liberation Sans", "Noto Sans CJK KR", sans-serif; white-space: nowrap; overflow: hidden; }
.row.sel { background: #484848; }
.sel .av b:nth-child(n+3), .sel .sws b { background: #3b3b3b; }
.row.sel .name { width: 113px; height: 10px; line-height: 8px; border: 1px solid #a8a8a8; padding: 0; }
.row.sel .ic { width: 10px; }
.sws { display: grid; grid-template-columns: repeat(8, 8px); column-gap: 1px; padding-left: 1px; align-items: center; }
.sws b { margin: 0 1px 0 0; }
.row .pick { background: #1d1d1d; }
.row .pick select { color: #b0b0b0; }
.row .pick svg { width: 6px; height: 6px; color: #777; }
.head { grid-template-columns: 39px 8px 12px 20px 126px 82px minmax(0, 1fr); background: #2e2e2e; font-size: 6px; color: #999; border-color: #161616; }
.head .num { font-weight: 400; font-size: 7px; }
.head i { font: italic 700 8px/8px "Liberation Serif", serif; }
.src { padding-left: 2px; border-right: 1px solid #181818; }
.plink { border-left: 1px solid #181818; padding-left: 2px; }
.row.prop { grid-template-columns: 70px 11px 10px 115px 87px minmax(0, 1fr); background: #252525; }
.nav { display: flex; gap: 1px; padding-left: 3px; color: #555; }
.row .nav svg { height: 7px; }
.nav .k, .st { color: #2d8ceb; }
.nav .p { color: #b5b5b5; }
.pname { width: 113px; height: 9px; padding-left: 2px; background: #484848; color: #9a9a9a; font: 7px/10px "Liberation Sans", sans-serif; }
.value { justify-content: flex-start; height: 9px; color: #2f86d8; font: 600 7px/9px "Open Sans", sans-serif; }

.time-area { position: relative; display: flex; flex-direction: column; min-width: 0; overflow: hidden; background: #232323; }
.navigator { height: 6px; margin-top: 1px; background: #403c34; }
.navigator i { display: block; width: 273px; height: 5px; border: solid #2d8ceb; border-width: 0 4px; border-radius: 3px; background: #6b6b6b; }
.ruler { display: flex; height: 12px; margin-left: -26px; }
.ruler span {
  flex: none;
  width: 57px;
  text-align: center;
  font: 7px/9px "Liberation Sans", sans-serif;
  background: linear-gradient(#777, #777) 50% 100% / 1px 3px no-repeat;
}
.ruler .zero { padding-left: 8px; }
.workarea { height: 8px; border-left: 4px solid #2d8ceb; border-radius: 3px 0 0 3px; background: #606060; }
.cache { display: flex; height: 3px; padding-left: 3px; }
.cache i { height: 2px; margin-top: 1px; background: #1fae27; }
.cache .a { width: 13px; }
.cache .b { flex: 1; margin-left: 100px; }
.tracks { flex: 1; padding-left: 2px; background: linear-gradient(90deg, #161616 2px, #484848 2px, #484848 16px, #303030 16px); }
.t { height: 10px; border-bottom: 1px solid #292929; }
.null { background: linear-gradient(90deg, #854343 14px, #7b3838 14px); }
.camera { background: linear-gradient(90deg, #9a848a 14px, #917a80 14px); }
.comp { background: linear-gradient(#a99a7c, #8d7f64); }
.keys { display: flex; align-items: center; gap: 109px; background: linear-gradient(90deg, #505050 14px, #353535 14px); }
.keys svg { width: 5px; height: 5px; color: #2d8ceb; margin-left: -2px; }
.keys svg + svg { color: #a9a9a9; margin-left: 0; }
.playhead { position: absolute; left: 2px; top: 9px; bottom: 0; width: 1px; background: #2d8ceb; }
.playhead svg { width: 8px; height: 9px; margin-left: -4px; fill: #2d8ceb; }
```
